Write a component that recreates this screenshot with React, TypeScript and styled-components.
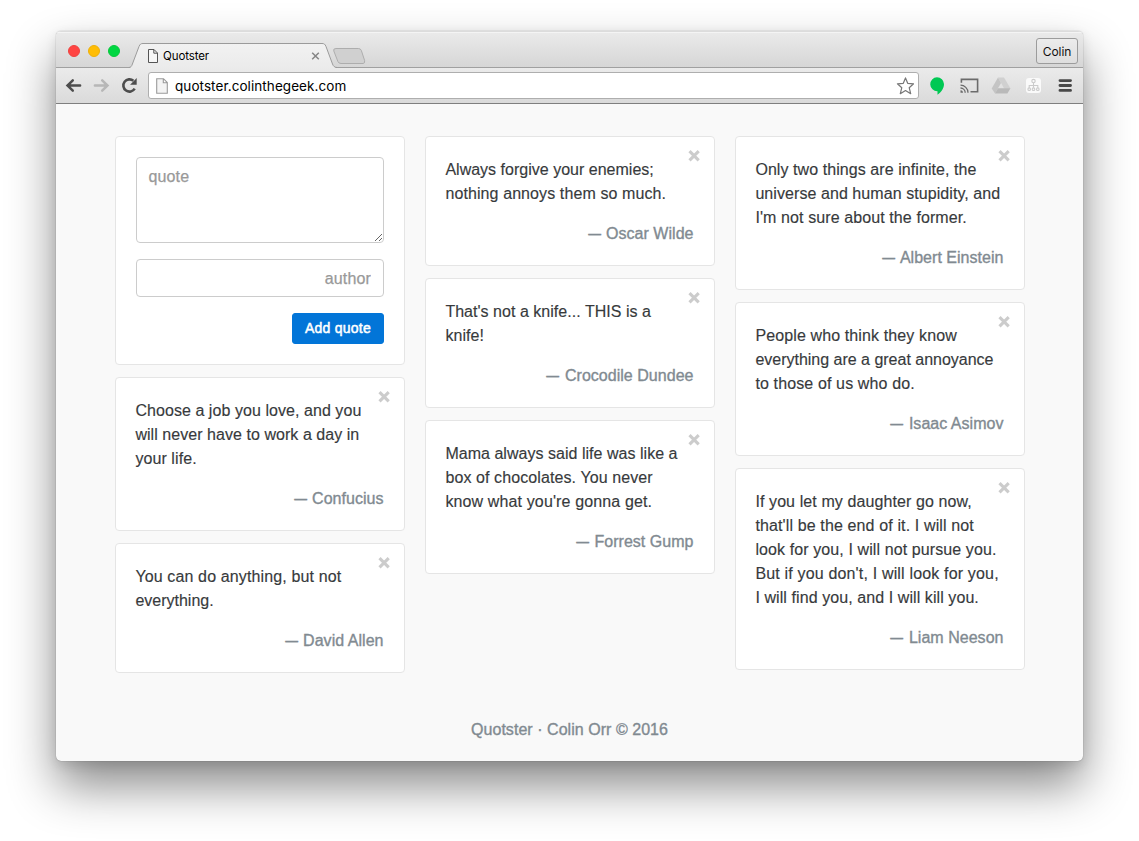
import React from "react";
import styled, { createGlobalStyle } from "styled-components";

const GlobalStyle = createGlobalStyle`
  * { box-sizing: border-box; }
  html, body { margin: 0; background: #fff; overflow: hidden; }
  body { font: 16px/24px "Liberation Sans", Arial, sans-serif; color: #373a3c; }
  p { margin: 0; }
`;

const Desktop = styled.div`
  width: 1139px;
  height: 841px;
  padding: 31px 56px 80px;
  overflow: hidden;
`;

const Window = styled.main`
  width: 1027px;
  height: 730px;
  display: flex;
  flex-direction: column;
  background: #f9f9f9;
  border-radius: 5px;
  box-shadow: 0 0 1px rgba(0, 0, 0, 0.5), 0 4px 12px rgba(0, 0, 0, 0.1), 0 25px 48px rgba(0, 0, 0, 0.46);
  overflow: hidden;
`;

const TabStrip = styled.header`
  height: 37px;
  flex: none;
  display: flex;
  align-items: flex-start;
  padding: 0 5px 0 12px;
  border-bottom: 1px solid #a0a0a0;
  background: linear-gradient(#ebebeb, #d6d6d6);
  box-shadow: inset 0 1px #dcdcdc, inset 0 2px #f4f4f4;
`;

const Lights = styled.div`
  display: flex;
  gap: 8px;
  margin: 14px 9px 0 0;
`;

const Light = styled.span<{ $fill: string; $edge: string }>`
  width: 12px;
  height: 12px;
  border-radius: 50%;
  background: ${(p) => p.$fill};
  border: 1px solid ${(p) => p.$edge};
`;

const Tab = styled.div`
  position: relative;
  width: 208px;
  height: 37px;
  display: flex;
  align-items: center;
  padding: 13px 17px 0 19px;
`;

const TabShape = styled.svg`
  position: absolute;
  left: 0;
  top: 0;
`;

const TabTitle = styled.span`
  position: relative;
  flex: 1;
  margin-left: 5px;
  font: 11.5px/16px Inter, sans-serif;
  letter-spacing: -0.1px;
  color: #000;
`;

const TabIcon = styled.svg`
  position: relative;
  flex: none;
`;

const NewTab = styled.svg`
  margin: 16px 0 0 -5px;
`;

const UserButton = styled.button`
  width: 42px;
  height: 26px;
  margin: 7px 0 0 auto;
  padding: 1px 0 0;
  border: 1px solid #9c9c9c;
  border-radius: 3px;
  background: linear-gradient(#ececec, #dedede);
  font: 12px/23px Inter, sans-serif;
  letter-spacing: -0.1px;
  color: #111;
`;

const Toolbar = styled.nav`
  height: 36px;
  flex: none;
  display: flex;
  align-items: center;
  padding: 0 8px 0 9px;
  border-bottom: 1px solid #7f7f7f;
  background: linear-gradient(#ebebeb, #dadada);
`;

const NavButtons = styled.div`
  flex: none;
  display: flex;
  gap: 10px;
  width: 83px;
`;

const AddressBar = styled.div`
  flex: none;
  width: 771px;
  height: 27px;
  display: flex;
  align-items: center;
  padding: 0 4px 0 7px;
  border: 1px solid #aeaeae;
  border-radius: 3px;
  background: #fff;
  font: 13.5px/20px Inter, sans-serif;
  color: #000;
`;

const Url = styled.span`
  flex: 1;
  margin-left: 7px;
  letter-spacing: 0.07px;
`;

const Extensions = styled.div`
  display: flex;
  align-items: center;
  gap: 12px;
  margin-left: 8px;
`;

const Page = styled.section`
  flex: 1;
  padding: 32px 58px 0 59px;
  display: flex;
  flex-direction: column;
`;

const Columns = styled.div`
  display: flex;
  gap: 20px;
  height: 537px;
`;

const Column = styled.div`
  width: 290px;
  display: flex;
  flex-direction: column;
  gap: 12px;
`;

const Card = styled.article<{ $quote?: boolean }>`
  position: relative;
  padding: ${(p) => (p.$quote ? "21px 20.5px 19px 19.4px" : "20px")};
  background: #fff;
  border: 1px solid #e5e5e5;
  border-radius: 4px;
`;

const QuoteForm = styled.form`
  display: flex;
  flex-direction: column;
  gap: 16px;
`;

const fieldFont = `
  width: 100%;
  padding: 7px 12px 5px 11.4px;
  border: 1px solid #ccc;
  border-radius: 4px;
  background: #fff;
  font: 16px/24px "Liberation Sans", Arial, sans-serif;
  letter-spacing: 0.15px;
  &::placeholder { color: #999; opacity: 1; -webkit-text-stroke: 0.25px #999; }
`;

const QuoteField = styled.textarea`
  ${fieldFont}
  display: block;
  height: 86px;
  resize: vertical;
`;

const AuthorField = styled.input`
  ${fieldFont}
  height: 38px;
  text-align: right;
`;

const AddButton = styled.button`
  align-self: flex-end;
  width: 92px;
  height: 31px;
  padding: 0;
  border: 1px solid #0275d8;
  border-radius: 3px;
  background: #0275d8;
  color: #fff;
  font: 14px/21px "Liberation Sans", Arial, sans-serif;
  letter-spacing: 0.25px;
  -webkit-text-stroke: 0.5px #fff;
`;

const QuoteText = styled.p`
  white-space: nowrap;
  -webkit-text-stroke: 0.15px #373a3c;
`;

const Line = styled.span<{ $spacing: number }>`
  display: block;
  letter-spacing: ${(p) => p.$spacing}px;
`;

const Author = styled.p`
  margin-top: 16px;
  text-align: right;
  color: #818a91;
  letter-spacing: 0.03px;
  -webkit-text-stroke: 0.35px #818a91;
`;

const Dash = styled.span`
  display: inline-block;
  transform: scaleX(0.8);
  transform-origin: 70% 50%;
`;

const RemoveIcon = styled.svg`
  position: absolute;
  right: 14px;
  top: 13px;
`;

const Footer = styled.footer`
  margin: 45px 1px 0 0;
  text-align: center;
  color: #818a91;
  letter-spacing: 0.04px;
  -webkit-text-stroke: 0.35px #818a91;
`;

type QuoteLine = [text: string, spacing: number];
type Quote = { lines: QuoteLine[]; author: string };

const columns: Quote[][] = [
  [
    {
      lines: [["Choose a job you love, and you", 0.06], ["will never have to work a day in", 0.05], ["your life.", 0.08]],
      author: "Confucius",
    },
    { lines: [["You can do anything, but not", 0.13], ["everything.", 0]], author: "David Allen" },
  ],
  [
    { lines: [["Always forgive your enemies;", 0.01], ["nothing annoys them so much.", 0.1]], author: "Oscar Wilde" },
    { lines: [["That's not a knife... THIS is a", 0.03], ["knife!", 0.08]], author: "Crocodile Dundee" },
    {
      lines: [["Mama always said life was like a", 0.03], ["box of chocolates. You never", 0.1], ["know what you're gonna get.", 0.13]],
      author: "Forrest Gump",
    },
  ],
  [
    {
      lines: [["Only two things are infinite, the", 0.07], ["universe and human stupidity, and", 0.07], ["I'm not sure about the former.", 0.1]],
      author: "Albert Einstein",
    },
    {
      lines: [["People who think they know", 0.12], ["everything are a great annoyance", -0.01], ["to those of us who do.", 0.13]],
      author: "Isaac Asimov",
    },
    {
      lines: [
        ["If you let my daughter go now,", 0.1],
        ["that'll be the end of it. I will not", 0.13],
        ["look for you, I will not pursue you.", 0.1],
        ["But if you don't, I will look for you,", 0.17],
        ["I will find you, and I will kill you.", 0.08],
      ],
      author: "Liam Neeson",
    },
  ],
];

function QuoteCard({ quote }: { quote: Quote }) {
  return (
    <Card $quote>
      <RemoveIcon width="12" height="12" viewBox="-0.2 0.3 12 12">
        <path d="M1.3 1.5 10.5 10.7M10.5 1.5 1.3 10.7" stroke="#ccc" strokeWidth="3.1" />
      </RemoveIcon>
      <QuoteText>
        {quote.lines.map(([text, spacing]) => (
          <Line key={text} $spacing={spacing}>{text}</Line>
        ))}
      </QuoteText>
      <Author><Dash>—</Dash> {quote.author}</Author>
    </Card>
  );
}

function BrowserChrome() {
  return (
    <>
      <TabStrip>
        <Lights>
          <Light $fill="#ff4543" $edge="#ee4340" />
          <Light $fill="#ffbd05" $edge="#eeb008" />
          <Light $fill="#00d742" $edge="#08c83d" />
        </Lights>
        <Tab>
          <TabShape width="208" height="37" viewBox="0 0 208 37">
            <defs>
              <linearGradient id="tab" x1="0" y1="0" x2="0" y2="1">
                <stop offset="0" stopColor="#f2f2f2" />
                <stop offset="1" stopColor="#ebebeb" />
              </linearGradient>
            </defs>
            <path d="M0 37C2 36.3 2.6 35.3 3.4 33L10 15.5C11 13 12 12.5 14 12.5H193C195 12.5 196 13 197 15.5L203.5 33C204.4 35.3 205.5 36.3 208 37Z" fill="url(#tab)" />
            <path d="M0 36.5C2 36.2 2.6 35.3 3.4 33L10 15.5C11 13 12 12.5 14 12.5H193C195 12.5 196 13 197 15.5L203.5 33C204.4 35.3 205.5 36.3 208 36.5" fill="none" stroke="#9b9b9b" />
          </TabShape>
          <TabIcon width="10" height="14" viewBox="0 0 10 14">
            <path d="M.5.5H6L9.5 4v9.5H.5ZM5.8.5V4.2H9.5" fill="#f6f6f6" stroke="#555" />
          </TabIcon>
          <TabTitle>Quotster</TabTitle>
          <TabIcon width="9" height="9" viewBox="0 0.5 9 9">
            <path d="M1.2 1.2 7.8 7.8M7.8 1.2 1.2 7.8" stroke="#858585" strokeWidth="1.5" />
          </TabIcon>
        </Tab>
        <NewTab width="34" height="18" viewBox="0 0 34 18">
          <path d="M4 1.5H26.5Q28.5 1.5 29.3 3.4L32.6 13.5Q33.2 16.5 31 16.5H9Q6.7 16.5 5.9 14.5L1.8 4Q1 1.5 4 1.5Z" fill="#d0d0d0" stroke="#adadad" />
        </NewTab>
        <UserButton>Colin</UserButton>
      </TabStrip>
      <Toolbar>
        <NavButtons>
          <svg width="18" height="18" viewBox="0.5 0.5 18 18">
            <path d="M15.6 9H3.4M8.3 3.8 3 9l5.3 5.2" fill="none" stroke="#4d4d4d" strokeWidth="2.5" strokeLinecap="round" />
          </svg>
          <svg width="18" height="18" viewBox="0.5 0.5 18 18">
            <path d="M2.4 9H14.6M9.7 3.8 15 9l-5.3 5.2" fill="none" stroke="#b7b7b7" strokeWidth="2.5" strokeLinecap="round" />
          </svg>
          <svg width="18" height="18" viewBox="0.5 0.5 18 18">
            <path d="M14.2 12.1A6.1 6.1 0 1 1 12.9 4.3" fill="none" stroke="#4d4d4d" strokeWidth="2.6" />
            <path d="M16.2 1.6V8.2H9.6Z" fill="#4d4d4d" />
          </svg>
        </NavButtons>
        <AddressBar>
          <svg width="12" height="16" viewBox="0 0 12 16">
            <path d="M.7.7H7.5L11.3 4.5V15.3H.7ZM7.3.7V4.8H11.3" fill="#f4f4f4" stroke="#9a9a9a" strokeWidth="1.1" />
          </svg>
          <Url>quotster.colinthegeek.com</Url>
          <svg width="18" height="18" viewBox="-0.5 0 18 18">
            <path d="M9 .9 11.2 6.3 17.1 6.8 12.7 10.7 14.2 16.7 9 13.5 3.8 16.7 5.3 10.7 .9 6.8 6.8 6.3Z" fill="#fff" stroke="#777" strokeWidth="1.2" strokeLinejoin="round" />
          </svg>
        </AddressBar>
        <Extensions>
          <svg width="20" height="20" viewBox="0 0 20 20">
            <path d="M10 1.2A7 7 0 0 1 17 8.1C17 12.8 14 16.6 10.5 18.7V15.2A7 7 0 1 1 10 1.2Z" fill="#00c853" />
          </svg>
          <svg width="20" height="20" viewBox="-0.5 0 20 20">
            <path d="M1.9 6.8V3.4H18.1V15.8H11" fill="none" stroke="#6b6b6b" strokeWidth="1.6" />
            <path d="M1 9.2A7.5 7.5 0 0 1 8.5 16.7M1 12A4.7 4.7 0 0 1 5.7 16.7" fill="none" stroke="#6b6b6b" strokeWidth="1.3" />
            <path d="M1 14.2A2.5 2.5 0 0 1 3.5 16.7H1Z" fill="#6b6b6b" />
          </svg>
          <svg width="20" height="20" viewBox="0 0.5 20 20">
            <path d="M7 2H13L19.5 13H13.2Z" fill="#d0d0d0" />
            <path d="M7 2 10 7.5 4 18 .7 13Z" fill="#c4c4c4" />
            <path d="M7 12.7H19.5L16.4 18H4Z" fill="#b9b9b9" />
          </svg>
          <svg width="20" height="20" viewBox="-0.5 0.5 20 20">
            <rect x="2.5" y="2.5" width="15" height="15" rx="3" fill="#fafafa" />
            <g fill="none" stroke="#cbcbcb" strokeWidth="1.1">
              <circle cx="10" cy="5.6" r="1.7" />
              <circle cx="5.7" cy="13.7" r="1.3" />
              <circle cx="10" cy="13.7" r="1.3" />
              <circle cx="14.3" cy="13.7" r="1.3" />
              <path d="M10 7.4V12.2M5.7 12.2V10H14.3V12.2" />
            </g>
          </svg>
          <svg width="20" height="20" viewBox="0 0.5 20 20">
            <path d="M5 5.1H15.5M5 10H15.5M5 14.9H15.5" stroke="#484848" strokeWidth="2.9" strokeLinecap="round" />
          </svg>
        </Extensions>
      </Toolbar>
    </>
  );
}

export default function App() {
  return (
    <Desktop>
      <GlobalStyle />
      <Window>
        <BrowserChrome />
        <Page>
          <Columns>
            {columns.map((quotes, index) => (
              <Column key={index}>
                {index === 0 && (
                  <Card>
                    <QuoteForm onSubmit={(e) => e.preventDefault()}>
                      <QuoteField placeholder="quote" />
                      <AuthorField placeholder="author" />
                      <AddButton>Add quote</AddButton>
                    </QuoteForm>
                  </Card>
                )}
                {quotes.map((quote) => (
                  <QuoteCard key={quote.author} quote={quote} />
                ))}
              </Column>
            ))}
          </Columns>
          <Footer>Quotster · Colin Orr © 2016</Footer>
        </Page>
      </Window>
    </Desktop>
  );
}
